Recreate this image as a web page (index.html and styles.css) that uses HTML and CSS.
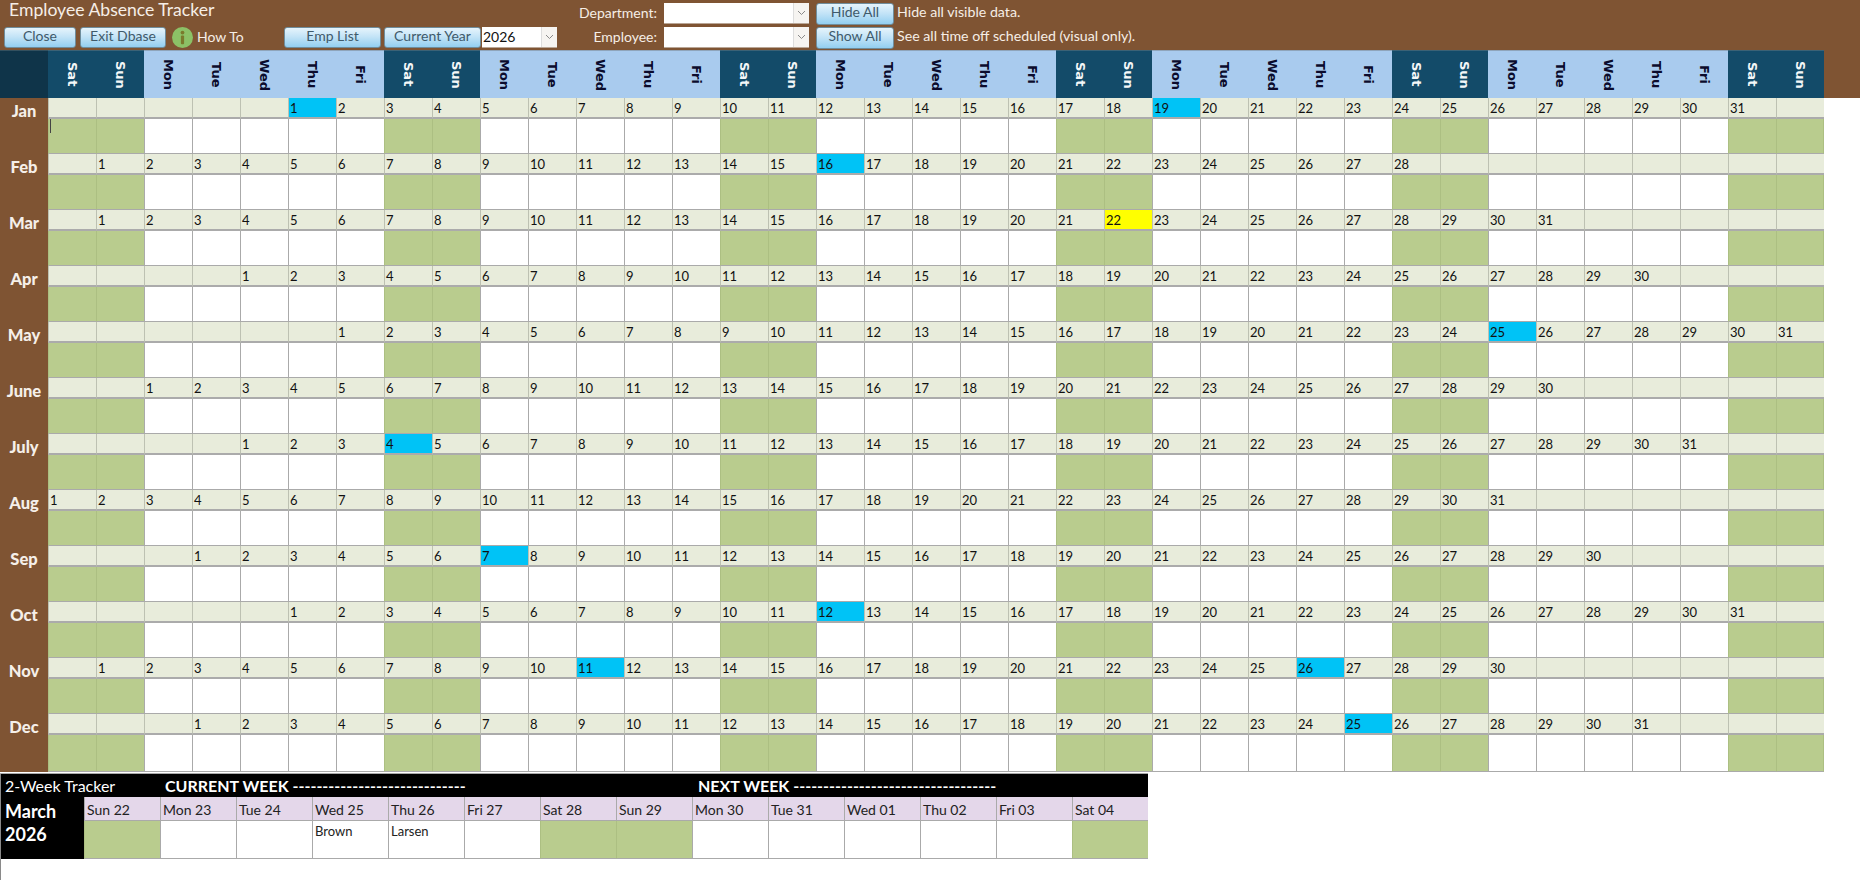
FILE: index.html
```html
<!DOCTYPE html>
<html lang="en">
<head>
<meta charset="utf-8">
<title>Employee Absence Tracker</title>
<link rel="stylesheet" href="styles.css">
</head>
<body>
<header class="head">
  <div class="bar">
    <div class="main">
      <div class="title">Employee Absence Tracker</div>
      <div class="tools">
        <button class="btn close">Close</button>
        <button class="btn exit">Exit Dbase</button>
        <svg class="info" width="21" height="21" viewBox="0 0 21 21"><circle cx="10.5" cy="10.5" r="10.5" fill="#8cc166"/><circle cx="10.5" cy="5.6" r="1.9" fill="#7a7a2c"/><rect x="8.9" y="8.6" width="3.2" height="8.6" rx="1" fill="#7a7a2c"/></svg>
        <span class="howto">How To</span>
        <button class="btn emp">Emp List</button>
        <button class="btn year">Current Year</button>
        <div class="combo yearbox"><span class="val">2026</span><span class="arrow"><svg width="9" height="6" viewBox="0 0 9 6"><path d="M1 1l3.5 3.5L8 1" fill="none" stroke="#8a8a8a"/></svg></span></div>
      </div>
    </div>
    <div class="filters">
      <label class="lab">Department:</label>
      <div class="combo"><span class="val"></span><span class="arrow"><svg width="9" height="6" viewBox="0 0 9 6"><path d="M1 1l3.5 3.5L8 1" fill="none" stroke="#8a8a8a"/></svg></span></div>
      <button class="btn">Hide All</button>
      <span class="note">Hide all visible data.</span>
      <label class="lab">Employee:</label>
      <div class="combo"><span class="val"></span><span class="arrow"><svg width="9" height="6" viewBox="0 0 9 6"><path d="M1 1l3.5 3.5L8 1" fill="none" stroke="#8a8a8a"/></svg></span></div>
      <button class="btn">Show All</button>
      <span class="note">See all time off scheduled (visual only).</span>
    </div>
  </div>
  <div class="strip">
    <div class="corner"></div>
    <div class="we">Sat</div><div class="we">Sun</div><div>Mon</div><div>Tue</div><div>Wed</div><div>Thu</div><div>Fri</div>
    <div class="we">Sat</div><div class="we">Sun</div><div>Mon</div><div>Tue</div><div>Wed</div><div>Thu</div><div>Fri</div>
    <div class="we">Sat</div><div class="we">Sun</div><div>Mon</div><div>Tue</div><div>Wed</div><div>Thu</div><div>Fri</div>
    <div class="we">Sat</div><div class="we">Sun</div><div>Mon</div><div>Tue</div><div>Wed</div><div>Thu</div><div>Fri</div>
    <div class="we">Sat</div><div class="we">Sun</div><div>Mon</div><div>Tue</div><div>Wed</div><div>Thu</div><div>Fri</div>
    <div class="we">Sat</div><div class="we">Sun</div>
  </div>
</header>

<table class="year-grid">
<tr class="d"><th rowspan="2">Jan</th><td><td><td><td><td><td class="hl">1<td>2<td>3<td>4<td>5<td>6<td>7<td>8<td>9<td>10<td>11<td>12<td>13<td>14<td>15<td>16<td>17<td>18<td class="hl">19<td>20<td>21<td>22<td>23<td>24<td>25<td>26<td>27<td>28<td>29<td>30<td>31<td></tr>
<tr class="b"><td class="caret"><td><td><td><td><td><td> <td><td><td><td><td><td><td> <td><td><td><td><td><td><td> <td><td><td><td><td><td><td> <td><td><td><td><td><td><td> <td><td></tr>
<tr class="d"><th rowspan="2">Feb</th><td><td>1<td>2<td>3<td>4<td>5<td>6<td>7<td>8<td>9<td>10<td>11<td>12<td>13<td>14<td>15<td class="hl">16<td>17<td>18<td>19<td>20<td>21<td>22<td>23<td>24<td>25<td>26<td>27<td>28 <td><td><td><td> <td><td><td><td></tr>
<tr class="b"><td><td><td><td><td><td><td> <td><td><td><td><td><td><td> <td><td><td><td><td><td><td> <td><td><td><td><td><td><td> <td><td><td><td><td><td><td> <td><td></tr>
<tr class="d"><th rowspan="2">Mar</th><td><td>1<td>2<td>3<td>4<td>5<td>6<td>7<td>8<td>9<td>10<td>11<td>12<td>13<td>14<td>15<td>16<td>17<td>18<td>19<td>20<td>21<td class="today">22<td>23<td>24<td>25<td>26<td>27<td>28<td>29<td>30<td>31<td><td><td><td><td></tr>
<tr class="b"><td><td><td><td><td><td><td> <td><td><td><td><td><td><td> <td><td><td><td><td><td><td> <td><td><td><td><td><td><td> <td><td><td><td><td><td><td> <td><td></tr>
<tr class="d"><th rowspan="2">Apr</th><td><td><td><td><td>1<td>2<td>3<td>4<td>5<td>6<td>7<td>8<td>9<td>10<td>11<td>12<td>13<td>14<td>15<td>16<td>17<td>18<td>19<td>20<td>21<td>22<td>23<td>24<td>25<td>26<td>27<td>28<td>29<td>30<td><td><td></tr>
<tr class="b"><td><td><td><td><td><td><td> <td><td><td><td><td><td><td> <td><td><td><td><td><td><td> <td><td><td><td><td><td><td> <td><td><td><td><td><td><td> <td><td></tr>
<tr class="d"><th rowspan="2">May</th><td><td><td><td><td><td><td>1<td>2<td>3<td>4<td>5<td>6<td>7<td>8<td>9<td>10<td>11<td>12<td>13<td>14<td>15<td>16<td>17<td>18<td>19<td>20<td>21<td>22<td>23<td>24<td class="hl">25<td>26<td>27<td>28<td>29<td>30<td>31</tr>
<tr class="b"><td><td><td><td><td><td><td> <td><td><td><td><td><td><td> <td><td><td><td><td><td><td> <td><td><td><td><td><td><td> <td><td><td><td><td><td><td> <td><td></tr>
<tr class="d"><th rowspan="2">June</th><td><td><td>1<td>2<td>3<td>4<td>5<td>6<td>7<td>8<td>9<td>10<td>11<td>12<td>13<td>14<td>15<td>16<td>17<td>18<td>19<td>20<td>21<td>22<td>23<td>24<td>25<td>26<td>27<td>28<td>29<td>30<td><td><td><td><td></tr>
<tr class="b"><td><td><td><td><td><td><td> <td><td><td><td><td><td><td> <td><td><td><td><td><td><td> <td><td><td><td><td><td><td> <td><td><td><td><td><td><td> <td><td></tr>
<tr class="d"><th rowspan="2">July</th><td><td><td><td><td>1<td>2<td>3<td class="hl">4<td>5<td>6<td>7<td>8<td>9<td>10<td>11<td>12<td>13<td>14<td>15<td>16<td>17<td>18<td>19<td>20<td>21<td>22<td>23<td>24<td>25<td>26<td>27<td>28<td>29<td>30<td>31<td><td></tr>
<tr class="b"><td><td><td><td><td><td><td> <td><td><td><td><td><td><td> <td><td><td><td><td><td><td> <td><td><td><td><td><td><td> <td><td><td><td><td><td><td> <td><td></tr>
<tr class="d"><th rowspan="2">Aug</th><td>1<td>2<td>3<td>4<td>5<td>6<td>7<td>8<td>9<td>10<td>11<td>12<td>13<td>14<td>15<td>16<td>17<td>18<td>19<td>20<td>21<td>22<td>23<td>24<td>25<td>26<td>27<td>28<td>29<td>30<td>31 <td><td><td> <td><td><td></tr>
<tr class="b"><td><td><td><td><td><td><td> <td><td><td><td><td><td><td> <td><td><td><td><td><td><td> <td><td><td><td><td><td><td> <td><td><td><td><td><td><td> <td><td></tr>
<tr class="d"><th rowspan="2">Sep</th><td><td><td><td>1<td>2<td>3<td>4<td>5<td>6<td class="hl">7<td>8<td>9<td>10<td>11<td>12<td>13<td>14<td>15<td>16<td>17<td>18<td>19<td>20<td>21<td>22<td>23<td>24<td>25<td>26<td>27<td>28<td>29<td>30<td><td><td><td></tr>
<tr class="b"><td><td><td><td><td><td><td> <td><td><td><td><td><td><td> <td><td><td><td><td><td><td> <td><td><td><td><td><td><td> <td><td><td><td><td><td><td> <td><td></tr>
<tr class="d"><th rowspan="2">Oct</th><td><td><td><td><td><td>1<td>2<td>3<td>4<td>5<td>6<td>7<td>8<td>9<td>10<td>11<td class="hl">12<td>13<td>14<td>15<td>16<td>17<td>18<td>19<td>20<td>21<td>22<td>23<td>24<td>25<td>26<td>27<td>28<td>29<td>30<td>31<td></tr>
<tr class="b"><td><td><td><td><td><td><td> <td><td><td><td><td><td><td> <td><td><td><td><td><td><td> <td><td><td><td><td><td><td> <td><td><td><td><td><td><td> <td><td></tr>
<tr class="d"><th rowspan="2">Nov</th><td><td>1<td>2<td>3<td>4<td>5<td>6<td>7<td>8<td>9<td>10<td class="hl">11<td>12<td>13<td>14<td>15<td>16<td>17<td>18<td>19<td>20<td>21<td>22<td>23<td>24<td>25<td class="hl">26<td>27<td>28<td>29<td>30 <td><td><td> <td><td><td></tr>
<tr class="b"><td><td><td><td><td><td><td> <td><td><td><td><td><td><td> <td><td><td><td><td><td><td> <td><td><td><td><td><td><td> <td><td><td><td><td><td><td> <td><td></tr>
<tr class="d"><th rowspan="2">Dec</th><td><td><td><td>1<td>2<td>3<td>4<td>5<td>6<td>7<td>8<td>9<td>10<td>11<td>12<td>13<td>14<td>15<td>16<td>17<td>18<td>19<td>20<td>21<td>22<td>23<td>24<td class="hl">25<td>26<td>27<td>28<td>29<td>30<td>31<td><td><td></tr>
<tr class="b last"><td><td><td><td><td><td><td> <td><td><td><td><td><td><td> <td><td><td><td><td><td><td> <td><td><td><td><td><td><td> <td><td><td><td><td><td><td> <td><td></tr>
</table>

<section class="tracker">
  <div class="tt-bar">
    <span class="tt-title">2-Week Tracker</span>
    <span class="tt-week cur">CURRENT WEEK -----------------------------</span>
    <span class="tt-week">NEXT WEEK ----------------------------------</span>
  </div>
  <div class="tt-grid">
    <div class="tt-month">March<br>2026</div>
    <div class="tt-h">Sun 22</div><div class="tt-h">Mon 23</div><div class="tt-h">Tue 24</div><div class="tt-h">Wed 25</div><div class="tt-h">Thu 26</div><div class="tt-h">Fri 27</div><div class="tt-h">Sat 28</div>
    <div class="tt-h">Sun 29</div><div class="tt-h">Mon 30</div><div class="tt-h">Tue 31</div><div class="tt-h">Wed 01</div><div class="tt-h">Thu 02</div><div class="tt-h">Fri 03</div><div class="tt-h">Sat 04</div>
    <div class="tt-c off"></div><div class="tt-c"></div><div class="tt-c"></div><div class="tt-c">Brown</div><div class="tt-c">Larsen</div><div class="tt-c"></div><div class="tt-c off"></div>
    <div class="tt-c off"></div><div class="tt-c"></div><div class="tt-c"></div><div class="tt-c"></div><div class="tt-c"></div><div class="tt-c"></div><div class="tt-c off"></div>
  </div>
</section>
</body>
</html>
```

FILE: styles.css
```css
* { box-sizing: border-box; }
html, body { margin: 0; padding: 0; }
body {
  width: 1860px;
  height: 880px;
  overflow: hidden;
  background: #fff;
  font-family: Lato, "Liberation Sans", sans-serif;
  color: #111;
}

/* header */
.head { background: #7f5433; height: 98px; }
.bar { display: flex; height: 50px; }
.main { width: 557px; padding-left: 4px; }
.title {
  height: 27px;
  padding: 0 0 0 5px;
  font-size: 17.6px;
  line-height: 19px;
  color: #f6eee6;
}
.tools { display: flex; align-items: center; height: 21px; }
.btn {
  height: 21px;
  padding: 0 0 3px;
  border: 1px solid #6f8d9c;
  border-radius: 3px;
  background: linear-gradient(#e6f4fc, #c4e4f7 45%, #93cff1);
  color: #3f5a6b;
  font: 14px/1 Lato, "Liberation Sans", sans-serif;
  text-align: center;
}
.close { width: 72px; margin-right: 4px; }
.exit { width: 86px; margin-right: 6px; }
.info { flex: none; }
.howto { width: 91px; padding: 0 0 3px 4px; font-size: 14px; color: #f6eee6; }
.emp { width: 97px; margin-right: 3px; }
.year { width: 97px; margin-right: 1px; }
.combo { display: flex; height: 21px; background: #fff; border-bottom: 1px solid #b9a696; }
.val { flex: 1; padding-left: 1px; font-size: 14px; line-height: 20px; color: #111; }
.arrow { display: flex; align-items: center; justify-content: center; width: 16px; background: #f6f4f1; border-left: 1px solid #ddd; }
.yearbox { width: 75px; }

.filters {
  display: grid;
  grid-template-columns: 101px 145px 78px auto;
  grid-template-rows: 21px 21px;
  row-gap: 3px;
  padding-top: 3px;
  align-items: center;
}
.lab { padding: 0 1px 3px 0; text-align: right; font-size: 14px; color: #f6eee6; }
.filters .combo { margin-left: 6px; width: 145px; }
.filters .btn { margin-left: 13px; width: 78px; height: 22px; }
.note { margin-left: 16px; padding-bottom: 5px; font-size: 14.2px; white-space: nowrap; color: #f6eee6; }

.strip { display: flex; height: 48px; width: 1824px; }
.strip div {
  display: flex;
  align-items: center;
  justify-content: center;
  width: 48px;
  background: #a9cbee;
  border-top: 1px solid #8fa5bb;
  writing-mode: vertical-rl;
  font: bold 13px "DejaVu Sans", sans-serif;
  color: #0b0b2c;
}
.strip .we { background: #134b69; border-top-color: #3b6276; color: #f4f7f8; }
.strip .corner { background: #0f3449; border-top-color: #33505f; }

/* calendar */
.year-grid {
  width: 1824px;
  table-layout: fixed;
  border-collapse: separate;
  border-spacing: 0;
}
.year-grid th {
  width: 48px;
  padding: 0;
  vertical-align: top;
  background: #7f5433;
  color: #f5efe9;
  font-size: 16.5px;
  line-height: 26px;
  font-weight: 900;
  text-align: center;
}
.d td {
  height: 21px;
  padding: 1px 0 0 1px;
  background: #e8ecdb;
  border-left: 1px solid #bdc1b2;
  border-bottom: 2px solid #ababab;
  font-size: 13px;
  line-height: 18px;
  vertical-align: middle;
}
.d .hl { background: #00c3f6; }
.d .today { background: #ffff00; }
.b td {
  height: 35px;
  padding: 0;
  background: #fff;
  border-left: 1px solid #aaa;
  border-bottom: 1px solid #aaa;
  vertical-align: top;
}
.b td:nth-child(7n+1), .b td:nth-child(7n+2) { background: #b9cc8e; border-left-color: #acbf82; }
.b td:last-child { border-right: 1px solid #acbf82; }
.last td { height: 37px; }
.caret::before { content: ""; display: block; width: 1px; height: 14px; margin-left: 1px; background: #444; }

/* two week tracker */
.tracker {
  width: 1148px;
  height: 106px;
  margin-top: 2px;
  border-left: 1px solid #8a8a8a;
  box-shadow: 0 -1px 0 #aaa;
  background: #fff;
}
.tt-bar {
  display: flex;
  align-items: center;
  height: 23px;
  background: #000;
  color: #fff;
}
.tt-title { width: 164px; padding-left: 4px; font-size: 16px; }
.tt-week { font-size: 16px; font-weight: 700; white-space: nowrap; }
.cur { width: 533px; }
.tt-grid {
  display: grid;
  grid-template-columns: 83px repeat(14, 76px);
  grid-template-rows: 24px 38px;
}
.tt-month {
  grid-row: 1 / span 2;
  padding: 3px 0 0 4px;
  background: #000;
  color: #fff;
  font-size: 18px;
  line-height: 23px;
  font-weight: 700;
}
.tt-h {
  padding: 1px 0 0 2px;
  background: #e4d7ea;
  border-left: 1px solid #aaa;
  border-bottom: 1px solid #aaa;
  font-size: 14px;
  line-height: 23px;
  color: #222;
}
.tt-c {
  padding: 3px 0 0 2px;
  border-left: 1px solid #aaa;
  border-bottom: 1px solid #aaa;
  font-size: 13px;
  line-height: 15px;
  color: #222;
}
.tt-c.off { background: #b9cc8e; border-left-color: #acbf82; }
```
